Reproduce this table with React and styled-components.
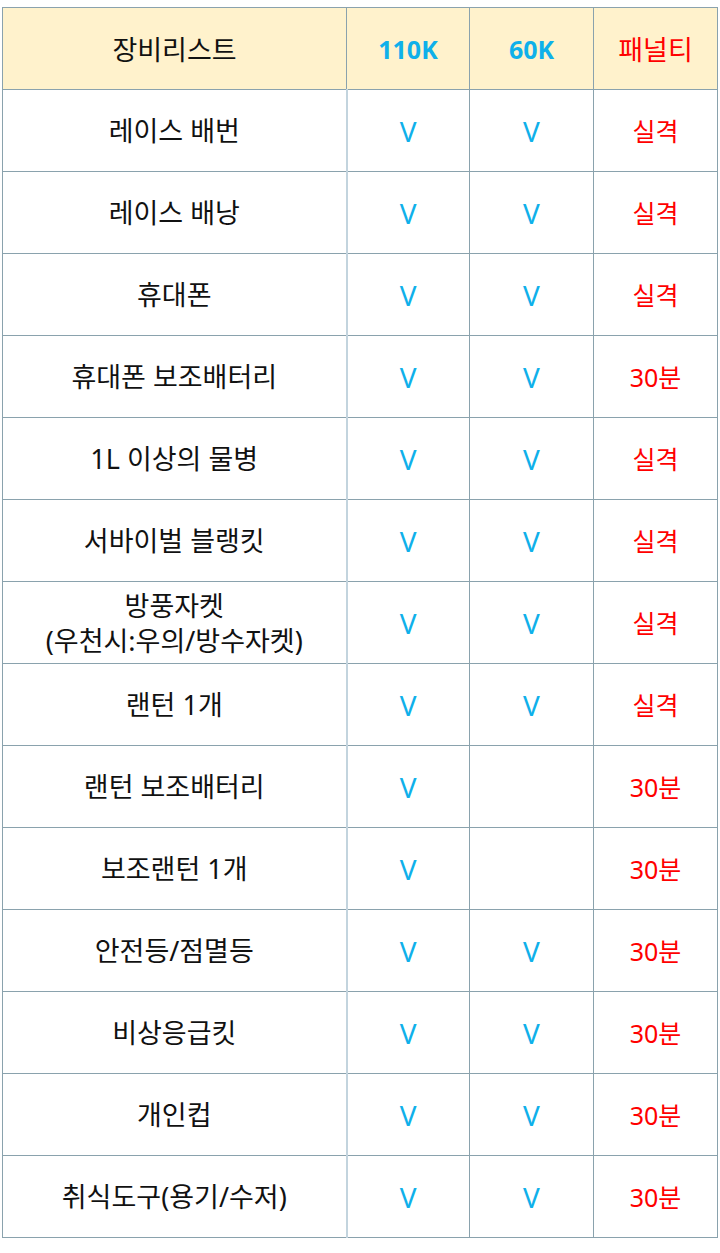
import React from 'react'
import styled, { createGlobalStyle } from 'styled-components'

const GlobalStyle = createGlobalStyle`
  html, body {
    margin: 0;
    padding: 0;
    background: #ffffff;
  }
  body {
    font-family: 'Noto Sans', 'Noto Sans CJK KR', sans-serif;
  }
`

const items = [
  { name: '레이스 배번', long: true, short: true, penalty: '실격' },
  { name: '레이스 배낭', long: true, short: true, penalty: '실격' },
  { name: '휴대폰', long: true, short: true, penalty: '실격' },
  { name: '휴대폰 보조배터리', long: true, short: true, penalty: '30분' },
  { name: '1L 이상의 물병', long: true, short: true, penalty: '실격' },
  { name: '서바이벌 블랭킷', long: true, short: true, penalty: '실격' },
  { name: ['방풍자켓', '(우천시:우의/방수자켓)'], long: true, short: true, penalty: '실격' },
  { name: '랜턴 1개', long: true, short: true, penalty: '실격' },
  { name: '랜턴 보조배터리', long: true, short: false, penalty: '30분' },
  { name: '보조랜턴 1개', long: true, short: false, penalty: '30분' },
  { name: '안전등/점멸등', long: true, short: true, penalty: '30분' },
  { name: '비상응급킷', long: true, short: true, penalty: '30분' },
  { name: '개인컵', long: true, short: true, penalty: '30분' },
  { name: '취식도구(용기/수저)', long: true, short: true, penalty: '30분' },
]

const App = () => {
  return (
    <Wrapper>
      <GlobalStyle />
      <Table>
        <colgroup>
          <col style={{ width: 344 }} />
          <col style={{ width: 123 }} />
          <col style={{ width: 124 }} />
          <col style={{ width: 124 }} />
        </colgroup>
        <thead>
          <tr>
            <HeadCell>장비리스트</HeadCell>
            <HeadCell $tone='blue'>110K</HeadCell>
            <HeadCell $tone='blue'>60K</HeadCell>
            <HeadCell $tone='red'>패널티</HeadCell>
          </tr>
        </thead>
        <tbody>
          {items.map((item, i) => {
            const lines = Array.isArray(item.name) ? item.name : [item.name]
            return (
              <tr key={i}>
                <Cell $first>
                  {lines.map((line) => (
                    <Line key={line}>{line}</Line>
                  ))}
                </Cell>
                <Cell>{item.long && <Check>V</Check>}</Cell>
                <Cell>{item.short && <Check>V</Check>}</Cell>
                <Cell>
                  <Penalty>{item.penalty}</Penalty>
                </Cell>
              </tr>
            )
          })}
        </tbody>
      </Table>
    </Wrapper>
  )
}

const Wrapper = styled.div`
  padding: 7px 3px 14px 2px;
`

const Table = styled.table`
  width: 715px;
  border-collapse: collapse;
  table-layout: fixed;
  border: 1px solid #8aa2ad;
`

const HeadCell = styled.th`
  height: 81px;
  padding: 0;
  background: #fff2cc;
  border: 1px solid #8aa2ad;
  font-size: ${(p) => (p.$tone === 'blue' ? '25px' : '27px')};
  font-weight: ${(p) => (p.$tone === 'blue' ? 700 : 400)};
  color: ${(p) =>
    p.$tone === 'blue' ? '#0fb0ea' : p.$tone === 'red' ? '#ff0000' : '#111111'};
  text-align: center;
  vertical-align: middle;
`

const Cell = styled.td`
  height: 81px;
  padding: 0;
  border: 1px solid #8aa2ad;
  ${(p) => p.$first && 'border-right: 2px solid #c3d4de;'}
  font-size: 27px;
  color: #111111;
  text-align: center;
  vertical-align: middle;
`

const Line = styled.div`
  line-height: 35px;
`

const Check = styled.span`
  color: #0fb0ea;
  font-size: 28px;
`

const Penalty = styled.span`
  color: #ff0000;
  font-size: 25px;
`

export default App
